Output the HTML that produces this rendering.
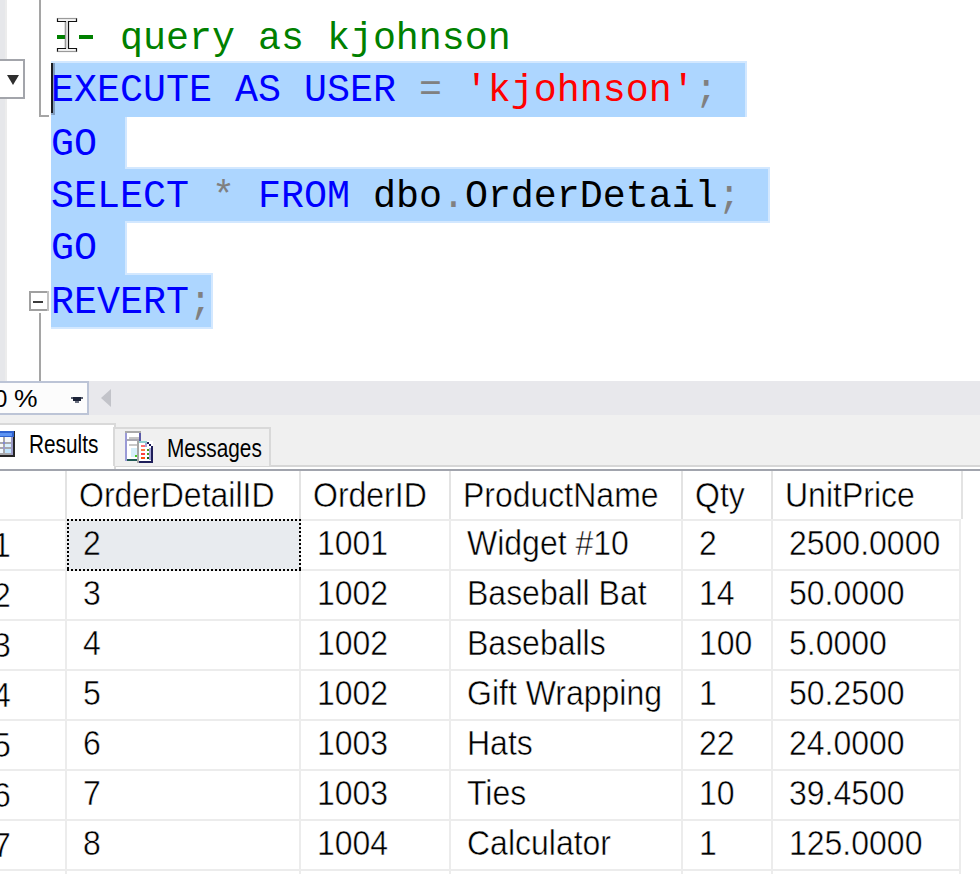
<!DOCTYPE html>
<html><head><meta charset="utf-8">
<style>
html,body{margin:0;padding:0;width:980px;height:874px;overflow:hidden;background:#fff;position:relative;font-family:"Liberation Sans",sans-serif;}
.a{position:absolute;}
.code{position:absolute;left:51px;font-family:"Liberation Mono",monospace;font-size:38.327px;line-height:53px;height:53px;white-space:pre;color:#000;}
.kw{color:#0000ff}.st{color:#ff0000}.cm{color:#008000}.op{color:#808080}
.sel{position:absolute;background:#add6ff;}
.hl{position:absolute;background:#e0e0e0;}
.g{position:absolute;font-size:35px;line-height:50px;height:50px;white-space:pre;color:#000;transform:scaleX(0.914);transform-origin:0 0;-webkit-text-stroke:0.5px #fff;}
.vl{position:absolute;width:2px;background:#ececec;}
.rl{position:absolute;height:2px;background:#ececec;}
</style></head><body>
<!-- editor -->
<div class="a" style="left:0;top:0;width:5px;height:381px;background:#e6e7ea"></div>
<div class="a" style="left:5px;top:0;width:2px;height:381px;background:#ececec"></div>
<!-- dropdown box -->
<div class="a" style="left:-2px;top:59px;width:23px;height:36px;border:2px solid #a3a5ab;background:#fff"></div>
<svg class="a" style="left:0;top:0" width="60" height="400">
<polygon points="7,75 19,75 13,85" fill="#2e2e2e"/>
<rect x="39" y="0" width="2" height="117" fill="#a5a5a5"/>
<rect x="39" y="115" width="10" height="2" fill="#a5a5a5"/>
<rect x="29" y="291" width="20" height="20" fill="#a0a0a0"/>
<rect x="47" y="291" width="2" height="20" fill="#c2c2c2"/>
<rect x="31" y="293" width="16" height="16" fill="#fff"/>
<rect x="33" y="301" width="10" height="2" fill="#3c3c3c"/>
<rect x="39" y="313" width="2" height="68" fill="#a5a5a5"/>
</svg>
<!-- selection -->
<div class="sel" style="left:51px;top:61px;width:696px;height:56px;background:#d3e8ff"></div>
<div class="sel" style="left:51px;top:117px;width:76px;height:52px;background:#d3e8ff"></div>
<div class="sel" style="left:51px;top:167px;width:719px;height:56px;background:#d3e8ff"></div>
<div class="sel" style="left:51px;top:221px;width:76px;height:54px;background:#d3e8ff"></div>
<div class="sel" style="left:51px;top:273px;width:162px;height:56px;background:#d3e8ff"></div>
<div class="sel" style="left:51px;top:63px;width:694px;height:54px"></div>
<div class="sel" style="left:51px;top:117px;width:74px;height:52px"></div>
<div class="sel" style="left:51px;top:169px;width:717px;height:52px"></div>
<div class="sel" style="left:51px;top:221px;width:74px;height:54px"></div>
<div class="sel" style="left:51px;top:275px;width:160px;height:52px"></div>
<!-- caret -->
<div class="a" style="left:53px;top:63px;width:2px;height:52px;background:#7f9cbf"></div>
<div class="a" style="left:51px;top:63px;width:2px;height:50px;background:#1a1d22"></div>
<div class="a" style="left:51px;top:113px;width:2px;height:2px;background:#8aa6c6"></div>
<!-- code -->
<div class="code" style="top:13px"><span class="cm">   query as kjohnson</span></div>
<div class="code" style="top:65px"><span class="kw">EXECUTE AS USER</span> <span class="op">=</span> <span class="st">'kjohnson'</span><span class="op">;</span></div>
<div class="code" style="top:119px"><span class="kw">GO</span></div>
<div class="code" style="top:171px"><span class="kw">SELECT</span> <span class="op">*</span> <span class="kw">FROM</span> dbo<span class="op">.</span>OrderDetail<span class="op">;</span></div>
<div class="code" style="top:223px"><span class="kw">GO</span></div>
<div class="code" style="top:277px"><span class="kw">REVERT</span><span class="op">;</span></div>
<div class="a" style="left:57px;top:35px;width:8px;height:3.5px;background:#008000"></div>
<div class="a" style="left:79px;top:35px;width:14px;height:3.5px;background:#008000"></div>
<!-- I-beam -->
<svg class="a" style="left:0;top:0" width="100" height="60">
<path d="M57.5,18.5 H76.5 V21.5 H68.5 V48.5 H76.5 V51.5 H57.5 V48.5 H65.5 V21.5 H57.5 Z" fill="#f6f6f6" stroke="#111" stroke-width="1.2"/>
<path d="M57.5,18.5 H76.5" stroke="#9a9a9a" stroke-width="1.2"/>
<path d="M57.5,51.5 H76.5" stroke="#9a9a9a" stroke-width="1.2"/>
<path d="M65.5,22 V48" stroke="#9a9a9a" stroke-width="1.2"/>
</svg>

<!-- zoom bar -->
<div class="a" style="left:0;top:381px;width:980px;height:34px;background:#e8e8ec"></div>
<div class="a" style="left:-2px;top:381px;width:87px;height:30px;border:2px solid #bcc4d6;background:#fcfcfc"></div>
<div class="a" style="left:-31px;top:382px;height:34px;line-height:34px;font-size:23px;color:#000">100</div><div class="a" style="left:14px;top:382px;height:34px;line-height:34px;font-size:23px;color:#000;transform:scaleX(1.15);transform-origin:0 0">%</div>
<svg class="a" style="left:0;top:381px" width="120" height="34">
<rect x="71" y="16" width="12" height="2" fill="#5a6070"/><rect x="73" y="16" width="8" height="2" fill="#1b2237"/><rect x="73" y="18" width="8" height="2" fill="#1b2237"/><rect x="75" y="20" width="4" height="2" fill="#6a7080"/>
<polygon points="111,8 111,26 101,17" fill="#c2c3c9"/>
</svg>

<!-- tab strip -->
<div class="a" style="left:0;top:415px;width:980px;height:54px;background:#f0f0f0"></div>
<div class="a" style="left:0;top:465px;width:980px;height:2px;background:#d6d6d6"></div>
<div class="a" style="left:0;top:467px;width:980px;height:2px;background:#fff"></div>
<div class="a" style="left:-2px;top:423px;width:114px;height:44px;border:2px solid #d9d9d9;border-bottom:none;background:#fff"></div>
<div class="a" style="left:0;top:425px;width:113px;height:44px;background:#fff"></div>
<div class="a" style="left:113px;top:427px;width:154px;height:37px;border:2px solid #d9d9d9;border-bottom:none;background:#f0f0f0"></div>
<svg class="a" style="left:0;top:431px" width="16" height="27" shape-rendering="crispEdges">
<rect x="-10" y="0" width="25" height="26" fill="#262626"/>
<rect x="-10" y="0" width="24" height="6" fill="#2f62d0"/>
<rect x="-10" y="2" width="22" height="3" fill="#5d93f2"/>
<rect x="-10" y="6" width="23" height="18" fill="#a8a8ac"/>
<rect x="-10" y="6" width="13" height="5" fill="#ffffff"/>
<rect x="5" y="6" width="6" height="5" fill="#f4f6fa"/>
<rect x="-10" y="13" width="13" height="3" fill="#f8f8f8"/>
<rect x="5" y="13" width="6" height="3" fill="#d8f0ff"/>
<rect x="-10" y="18" width="13" height="4" fill="#f0f8ff"/>
<rect x="5" y="18" width="6" height="4" fill="#bfe4ff"/>
<rect x="11" y="6" width="2" height="18" fill="#9c9cc8"/>
<rect x="3" y="11" width="2" height="2" fill="#7f86d8"/>
<rect x="3" y="16" width="2" height="2" fill="#9a96d8"/>
</svg>
<svg class="a" style="left:124px;top:430px" width="30" height="34" shape-rendering="crispEdges">
<rect x="1" y="1" width="16" height="30" fill="#ffffff"/>
<rect x="1" y="1" width="16" height="2" fill="#a9a9a9"/>
<rect x="1" y="3" width="2" height="28" fill="#9a9ad6"/>
<rect x="3" y="29" width="12" height="2" fill="#1f5a55"/>
<rect x="15" y="3" width="2" height="8" fill="#5c5ca8"/>
<rect x="5" y="7" width="10" height="2" fill="#c4c4c4"/>
<rect x="3" y="9" width="12" height="2" fill="#a8a8b0"/>
<rect x="5" y="14" width="8" height="2" fill="#c8c8c8"/>
<rect x="7" y="18" width="6" height="9" fill="#d6effa"/>
<rect x="11" y="25" width="2" height="2" fill="#44cc22"/>
<rect x="13" y="11" width="16" height="22" fill="#ffffff"/>
<rect x="13" y="11" width="2" height="22" fill="#a6a6a6"/>
<rect x="15" y="11" width="8" height="2" fill="#8fd0d0"/>
<rect x="23" y="12" width="2" height="2" fill="#1e1e5a"/>
<rect x="25" y="14" width="2" height="2" fill="#1e1e5a"/>
<rect x="27" y="16" width="2" height="17" fill="#1e1e5a"/>
<rect x="15" y="31" width="14" height="2" fill="#1e1e5a"/>
<rect x="21" y="13" width="2" height="4" fill="#a8a8d8"/>
<rect x="25" y="18" width="2" height="12" fill="#a8a8d8"/>
<rect x="17" y="15" width="4" height="2" fill="#ff7070"/>
<rect x="17" y="19" width="4" height="2" fill="#ff7a40"/>
<rect x="17" y="23" width="4" height="2" fill="#ff4040"/>
<rect x="17" y="27" width="4" height="2" fill="#ff5010"/>
<rect x="23" y="19" width="2" height="2" fill="#4a9a1a"/>
<rect x="23" y="23" width="2" height="2" fill="#4a9a1a"/>
<rect x="23" y="27" width="2" height="2" fill="#156015"/>
</svg>
<div class="a" style="left:29px;top:426px;height:36px;line-height:36px;font-size:26px;transform:scaleX(0.8);transform-origin:0 0;color:#000">Results</div>
<div class="a" style="left:167px;top:430px;height:36px;line-height:36px;font-size:26px;transform:scaleX(0.8);transform-origin:0 0;color:#000">Messages</div>
<div class="a" style="left:0;top:469px;width:980px;height:2px;background:#a1a4ad"></div>

<!-- grid -->
<div class="a" style="left:67px;top:521px;width:233px;height:49px;background:#e8ebef"></div>
<div class="vl" style="left:65px;top:471px;height:49px;background:#e3e3e3"></div>
<div class="vl" style="left:299px;top:471px;height:49px;background:#e3e3e3"></div>
<div class="vl" style="left:449px;top:471px;height:49px;background:#e3e3e3"></div>
<div class="vl" style="left:681px;top:471px;height:49px;background:#e3e3e3"></div>
<div class="vl" style="left:771px;top:471px;height:49px;background:#e3e3e3"></div>
<div class="vl" style="left:961px;top:471px;height:48px;background:#e3e3e3"></div>
<div class="vl" style="left:65px;top:520px;height:354px"></div>
<div class="vl" style="left:299px;top:520px;height:354px"></div>
<div class="vl" style="left:449px;top:520px;height:354px"></div>
<div class="vl" style="left:681px;top:520px;height:354px"></div>
<div class="vl" style="left:771px;top:520px;height:354px"></div>
<div class="vl" style="left:959px;top:520px;height:354px"></div>
<div class="rl" style="left:0;top:519px;width:961px"></div>
<div class="rl" style="left:0;top:569px;width:961px"></div>
<div class="rl" style="left:0;top:619px;width:961px"></div>
<div class="rl" style="left:0;top:669px;width:961px"></div>
<div class="rl" style="left:0;top:719px;width:961px"></div>
<div class="rl" style="left:0;top:769px;width:961px"></div>
<div class="rl" style="left:0;top:819px;width:961px"></div>
<div class="rl" style="left:0;top:869px;width:961px"></div>
<div class="a" style="left:67px;top:519px;width:234px;height:2px;background:repeating-linear-gradient(90deg,#000 0 2px,transparent 2px 4px)"></div>
<div class="a" style="left:67px;top:569px;width:234px;height:2px;background:repeating-linear-gradient(90deg,#000 0 2px,transparent 2px 4px)"></div>
<div class="a" style="left:67px;top:519px;width:2px;height:52px;background:repeating-linear-gradient(180deg,#000 0 2px,transparent 2px 4px)"></div>
<div class="a" style="left:299px;top:519px;width:2px;height:52px;background:repeating-linear-gradient(180deg,#000 0 2px,transparent 2px 4px)"></div>
<div class="g" style="left:78.5px;top:470px">OrderDetailID</div>
<div class="g" style="left:312.5px;top:470px">OrderID</div>
<div class="g" style="left:462.5px;top:470px">ProductName</div>
<div class="g" style="left:694.5px;top:470px">Qty</div>
<div class="g" style="left:784.5px;top:470px">UnitPrice</div>
<div class="g" style="left:-7px;top:520px">1</div>
<div class="g" style="left:82.5px;top:518px;-webkit-text-stroke-color:#e8ebef">2</div>
<div class="g" style="left:316.5px;top:518px">1001</div>
<div class="g" style="left:466.5px;top:518px">Widget #10</div>
<div class="g" style="left:698.5px;top:518px">2</div>
<div class="g" style="left:788.5px;top:518px">2500.0000</div>
<div class="g" style="left:-7px;top:570px">2</div>
<div class="g" style="left:82.5px;top:568px">3</div>
<div class="g" style="left:316.5px;top:568px">1002</div>
<div class="g" style="left:466.5px;top:568px">Baseball Bat</div>
<div class="g" style="left:698.5px;top:568px">14</div>
<div class="g" style="left:788.5px;top:568px">50.0000</div>
<div class="g" style="left:-7px;top:620px">3</div>
<div class="g" style="left:82.5px;top:618px">4</div>
<div class="g" style="left:316.5px;top:618px">1002</div>
<div class="g" style="left:466.5px;top:618px">Baseballs</div>
<div class="g" style="left:698.5px;top:618px">100</div>
<div class="g" style="left:788.5px;top:618px">5.0000</div>
<div class="g" style="left:-7px;top:670px">4</div>
<div class="g" style="left:82.5px;top:668px">5</div>
<div class="g" style="left:316.5px;top:668px">1002</div>
<div class="g" style="left:466.5px;top:668px">Gift Wrapping</div>
<div class="g" style="left:698.5px;top:668px">1</div>
<div class="g" style="left:788.5px;top:668px">50.2500</div>
<div class="g" style="left:-7px;top:720px">5</div>
<div class="g" style="left:82.5px;top:718px">6</div>
<div class="g" style="left:316.5px;top:718px">1003</div>
<div class="g" style="left:466.5px;top:718px">Hats</div>
<div class="g" style="left:698.5px;top:718px">22</div>
<div class="g" style="left:788.5px;top:718px">24.0000</div>
<div class="g" style="left:-7px;top:770px">6</div>
<div class="g" style="left:82.5px;top:768px">7</div>
<div class="g" style="left:316.5px;top:768px">1003</div>
<div class="g" style="left:466.5px;top:768px">Ties</div>
<div class="g" style="left:698.5px;top:768px">10</div>
<div class="g" style="left:788.5px;top:768px">39.4500</div>
<div class="g" style="left:-7px;top:820px">7</div>
<div class="g" style="left:82.5px;top:818px">8</div>
<div class="g" style="left:316.5px;top:818px">1004</div>
<div class="g" style="left:466.5px;top:818px">Calculator</div>
<div class="g" style="left:698.5px;top:818px">1</div>
<div class="g" style="left:788.5px;top:818px">125.0000</div>
</body></html>
